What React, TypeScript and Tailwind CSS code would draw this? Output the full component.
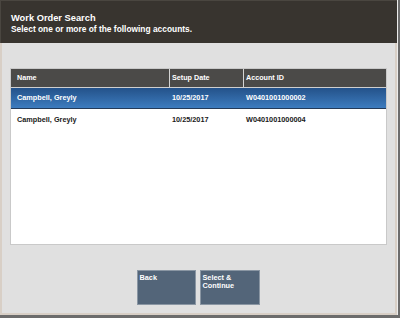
export default function App() {
  const rows = [
    { name: "Campbell, Greyly", date: "10/25/2017", id: "W0401001000002", selected: true },
    { name: "Campbell, Greyly", date: "10/25/2017", id: "W0401001000004", selected: false },
  ];

  return (
    <div
      className="w-[400px] h-[318px] bg-[#6c6c6c] overflow-hidden"
      style={{ fontFamily: '"Liberation Sans", Arial, sans-serif' }}
    >
      <div className="w-[398px] h-[315px] flex flex-col bg-[#ececec]">
        {/* title bar */}
        <div className="h-[43px] w-[397px] bg-[#38342f] border-l border-t border-[#4a4640] pl-[10px] pt-[12px] text-white font-bold">
          <div className="text-[9.3px] leading-[11px]">Work Order Search</div>
          <div className="text-[8.4px] leading-[10px]">Select one or more of the following accounts.</div>
        </div>

        {/* content */}
        <div className="flex-1 w-[397px] flex flex-col bg-[#e0e0e0] border-l-2 border-r-2 border-b-2 border-[#d8cfc6]">
          <div className="ml-[8px] mt-[25px] w-[377px] h-[177px] bg-white border border-[#c9c9c9] flex flex-col">
            <div className="h-[19px] flex bg-[#4b4a48] text-white font-bold text-[7.2px] border-b border-[#cfcfcf]">
              <div className="w-[159px] pl-[6px] flex items-center border-r border-[#d4d4d4]">Name</div>
              <div className="w-[74px] pl-[2px] flex items-center border-r border-[#d4d4d4]">Setup Date</div>
              <div className="flex-1 pl-[2px] flex items-center">Account ID</div>
            </div>
            {rows.map((r, i) =>
              r.selected ? (
                <div
                  key={i}
                  className="h-[21px] flex font-bold text-[7.3px] text-white bg-gradient-to-b from-[#24528a] to-[#3d7cbf] border-b border-[#243a58]"
                >
                  <div className="w-[159px] pl-[6px] flex items-center">{r.name}</div>
                  <div className="w-[74px] pl-[2px] flex items-center">{r.date}</div>
                  <div className="flex-1 pl-[2px] flex items-center">{r.id}</div>
                </div>
              ) : (
                <div key={i} className="h-[22px] flex font-bold text-[7.3px] text-[#1a1a1a]">
                  <div className="w-[159px] pl-[6px] flex items-center">{r.name}</div>
                  <div className="w-[74px] pl-[2px] flex items-center">{r.date}</div>
                  <div className="flex-1 pl-[2px] flex items-center">{r.id}</div>
                </div>
              )
            )}
          </div>

          <div className="mt-[25px] flex justify-center gap-[4px] pr-[1px]">
            <button className="w-[59px] h-[35px] bg-[#536579] border border-[#8a96a3] text-left align-top text-white font-bold text-[7.3px] leading-[7.5px] pl-[2px] pt-[3px] flex flex-col">
              Back
            </button>
            <button className="w-[60px] h-[35px] bg-[#536579] border border-[#8a96a3] text-left text-white font-bold text-[7.3px] leading-[7.5px] pl-[2px] pt-[3px] flex flex-col">
              <span>Select &amp;</span>
              <span>Continue</span>
            </button>
          </div>
        </div>
      </div>
    </div>
  );
}
